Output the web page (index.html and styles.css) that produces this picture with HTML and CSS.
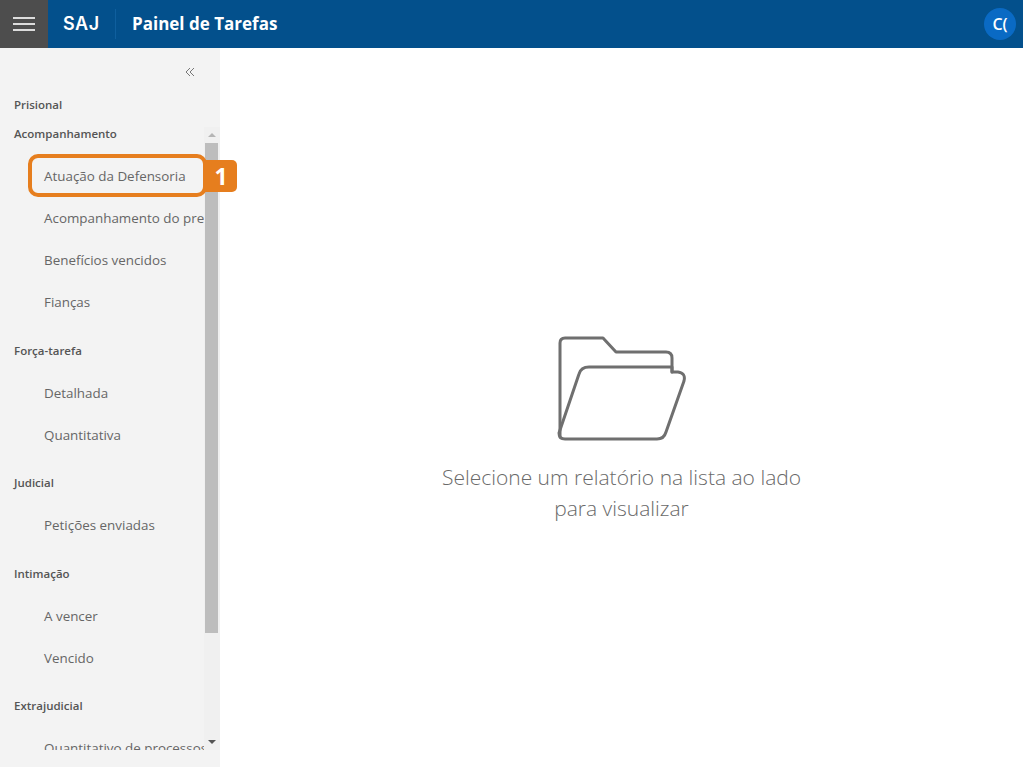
FILE: index.html
```html
<!DOCTYPE html>
<html lang="pt-BR">
<head>
<meta charset="utf-8">
<title>Painel de Tarefas</title>
<link rel="stylesheet" href="styles.css">
</head>
<body>
<header class="topbar">
  <button class="menu-btn" aria-label="Menu"><span></span><span></span><span></span></button>
  <div class="brand">SAJ</div>
  <h1 class="title">Painel de Tarefas</h1>
  <div class="avatar">C(</div>
</header>
<div class="body">
  <aside class="sidebar">
    <div class="collapse">
      <svg width="10" height="10" viewBox="0 0 10 10" fill="none" stroke="#777" stroke-width="1"><path d="M5 1 1 5l4 4M9 1 5 5l4 4"/></svg>
    </div>
    <div class="root">Prisional</div>
    <div class="scroll-area">
      <div class="list">
        <section class="group">
          <h2>Acompanhamento</h2>
          <a>Atuação da Defensoria</a>
          <a>Acompanhamento do preso</a>
          <a>Benefícios vencidos</a>
          <a>Fianças</a>
        </section>
        <section class="group">
          <h2>Força-tarefa</h2>
          <a>Detalhada</a>
          <a>Quantitativa</a>
        </section>
        <section class="group">
          <h2>Judicial</h2>
          <a>Petições enviadas</a>
        </section>
        <section class="group">
          <h2>Intimação</h2>
          <a>A vencer</a>
          <a>Vencido</a>
        </section>
        <section class="group">
          <h2>Extrajudicial</h2>
          <a>Quantitativo de processos</a>
        </section>
      </div>
      <div class="scrollbar">
        <div class="arrow up"></div>
        <div class="track"><div class="thumb"></div></div>
        <div class="arrow down"></div>
      </div>
    </div>
    <div class="callout-box"></div>
    <div class="callout-num">1</div>
  </aside>
  <main class="content">
    <svg class="folder" width="130" height="106" viewBox="0 0 130 106" fill="none" stroke="#6f6f6f" stroke-width="3" stroke-linejoin="round" stroke-linecap="round">
      <path d="M4 102 V8 Q4 3 9 3 H47 L60 17 H110 Q116 17 116 23 V37"/>
      <path d="M116 37 H122 Q130 38 128 46 L110 97 Q108 104 101 104 H9 Q3 104 3 98 L23 39 Q25 32 33 32 H116 V37"/>
    </svg>
    <p class="message">Selecione um relatório na lista ao lado<br>para visualizar</p>
  </main>
</div>
</body>
</html>
```
FILE: styles.css
```css
* { box-sizing: border-box; }
html, body { margin: 0; height: 100%; overflow: hidden; }
body { font-family: "Open Sans", "Noto Sans", sans-serif; background: #fff; display: flex; flex-direction: column; }

.topbar { height: 48px; flex: none; background: #03508c; display: flex; align-items: center; color: #fff; }
.menu-btn { width: 48px; height: 48px; background: #4d4d4d; border: 0; padding: 0; display: flex; flex-direction: column; align-items: center; justify-content: center; gap: 4px; }
.menu-btn span { display: block; width: 22px; height: 2px; background: #dcdcdc; }
.brand { font-family: Inter, sans-serif; font-size: 18px; font-weight: 600; letter-spacing: 0.6px; width: 68px; padding-left: 15px; height: 30px; line-height: 30px; border-right: 1px solid #0f5f9e; }
.title { margin: 0 0 2px 16px; font-size: 17px; font-weight: 700; }
.avatar { margin-left: auto; margin-right: 7px; width: 32px; height: 32px; border-radius: 50%; background: #0a6ac4; font-size: 16px; font-weight: 600; text-align: center; line-height: 32px; }

.body { flex: 1; display: flex; min-height: 0; }
.sidebar { width: 220px; flex: none; background: #f3f3f3; position: relative; display: flex; flex-direction: column; color: #555; }
.collapse { height: 34px; padding: 19px 25px 0 0; display: flex; justify-content: flex-end; align-items: flex-start; line-height: 0; flex: none; }
.root { font-size: 11.5px; font-weight: 600; height: 45px; padding: 14px 0 0 14px; line-height: 17px; flex: none; color: #555; }
.scroll-area { display: flex; height: 623px; flex: none; overflow: hidden; }
.list { width: 204px; flex: none; overflow: hidden; margin-top: -2px; }
.group { margin-bottom: 18.5px; }
.group h2 { margin: 0 0 13px; font-size: 11.5px; font-weight: 600; height: 17px; line-height: 17px; padding-left: 14px; color: #555; }
.group a { display: block; height: 42px; line-height: 42px; padding-left: 44px; font-size: 13.4px; white-space: nowrap; color: #666; }

.scrollbar { width: 16px; flex: none; background: #f0f0f0; display: flex; flex-direction: column; }
.arrow { height: 16px; flex: none; width: 100%; position: relative; }
.arrow::after { content: ""; position: absolute; left: 4px; border-left: 4px solid transparent; border-right: 4px solid transparent; }
.up::after { top: 6px; border-bottom: 4px solid #b5b5b5; }
.down::after { top: 6px; border-top: 4px solid #555; }
.track { flex: 1; width: 100%; padding: 0 2px 0 1px; }
.thumb { height: 490px; background: #bdbdbd; }

.callout-box { position: absolute; left: 28px; top: 106px; width: 179px; height: 43px; border: 4px solid #e67e1e; border-radius: 10px; }
.callout-num { position: absolute; left: 205px; top: 112px; width: 32px; height: 32px; background: #e67e1e; color: #fff; border-radius: 0 5px 5px 0; font-size: 23px; font-weight: 700; text-align: center; line-height: 32px; }

.content { flex: 1; display: flex; flex-direction: column; align-items: center; padding-top: 287px; }
.folder { margin-left: -2px; }
.message { margin: 21px 0 0; font-size: 21px; font-weight: 300; line-height: 31px; text-align: center; color: #6a6a6a; }
```
